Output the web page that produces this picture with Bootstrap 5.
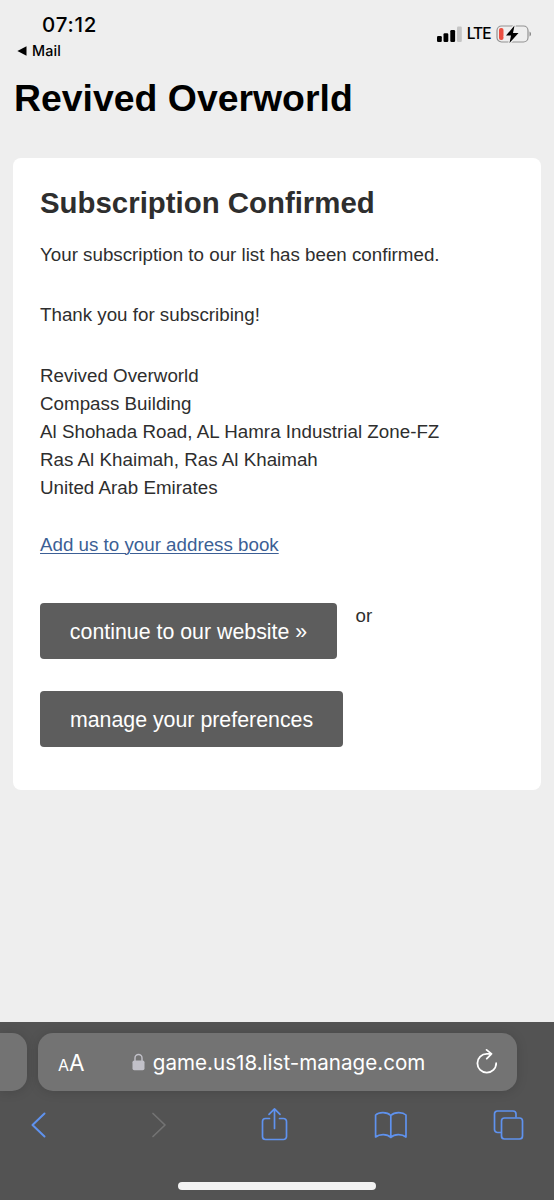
<!DOCTYPE html>
<html lang="en">
<head>
<meta charset="utf-8">
<meta name="viewport" content="width=device-width, initial-scale=1">
<title>Subscription Confirmed</title>
<link href="https://cdn.jsdelivr.net/npm/bootstrap@5.3.0/dist/css/bootstrap.min.css" rel="stylesheet">
<style>
body { background: #eee; color: #2e2e2e; font: 18.75px/28.1px "Liberation Sans", Arial, sans-serif; height: 1200px; overflow: hidden; }
.ui-font { font-family: Inter, "Liberation Sans", sans-serif; }
.status { height: 66px; padding: 11px 22.5px 0 17px; color: #000; }
.clock { font-size: 20.5px; line-height: 27px; font-weight: 500; padding-left: 25px; letter-spacing: .8px; }
.back { font-size: 14.3px; line-height: 20px; font-weight: 500; margin-top: 3px; gap: 5px; letter-spacing: .15px; }
.signal { padding-top: 14px; gap: 5px; height: 32px; }
.lte { font-size: 15.5px; line-height: 18px; letter-spacing: -1px; font-weight: 500; }
.site-title { font-size: 37.4px; line-height: 44px; font-weight: 700; color: #000; margin: 10px 0 0 14px; }
.panel { border: 0; border-radius: 8px; margin: 38px 13.5px 0 13px; padding: 27px 27px 43px; height: 632px; color: inherit; }
.panel h2 { font-size: 29.4px; line-height: 36px; font-weight: 700; margin: 0 0 20px; }
.panel p { margin: 0 0 32.4px; }
.panel address { margin: 0 0 28.1px; line-height: 28.1px; letter-spacing: .02px; }
.book { color: #3c5f95; text-underline-offset: 2px; text-decoration-thickness: 1px; }
.btn-grey { --bs-btn-color: #fff; --bs-btn-bg: #5d5d5d; --bs-btn-border-width: 0; --bs-btn-border-radius: 4px; --bs-btn-padding-x: 0; --bs-btn-padding-y: 0; font-size: 21.35px; line-height: 58px; height: 56px; }
.go { width: 297px; }
.prefs { width: 303px; margin-top: 32px; }
.or { margin-left: 18.5px; margin-top: -1px; }
.browser { height: 178px; background: #535353; color: #fff; padding-top: 10.5px; }
.pill { background: #737373; height: 58.5px; border-radius: 15px; box-shadow: 0 1px 12px rgba(0,0,0,.14); }
.prev-tab { width: 27px; border-radius: 0 15px 15px 0; margin-right: 11px; }
.tab-main { width: 478.5px; padding: 0 20px 0 20px; }
.text-size { padding-top: 3px; }
.small-a { font-size: 16px; }
.big-a { font-size: 22.5px; }
.site-address { gap: 8px; margin-right: 3px; }
.url { font-size: 20.6px; line-height: 28px; padding-top: 2px; }
.tools { color: #5f92ee; padding: 16px 28px 0 21px; }
.home { width: 198px; height: 7.5px; border-radius: 4px; background: #f3f3f3; margin-top: 39.3px; }
svg { display: block; flex: none; }
</style>
</head>
<body class="d-flex flex-column">
<header class="status ui-font d-flex justify-content-between">
  <div>
    <div class="clock">07:12</div>
    <div class="back d-flex align-items-center">
      <svg width="10" height="10" viewBox="0 0 10 10"><path d="M.4 5 9.500.3v9.400z" fill="#000"/></svg>Mail
    </div>
  </div>
  <div class="signal d-flex align-items-center">
    <svg width="25" height="18" viewBox="0 0 25 18"><rect x="0" y="11" width="4.800" height="6" rx="1.200"/><rect x="6.500" y="8.300" width="4.800" height="8.700" rx="1.200"/><rect x="13.300" y="5" width="4.800" height="12" rx="1.200"/><rect x="20" y="1.500" width="4.800" height="15.500" rx="1.200" fill="#c5c5c5"/></svg>
    <span class="lte">LTE</span>
    <svg width="36" height="20" viewBox="0 0 36 20"><rect x="1" y="2" width="31" height="16" rx="4.500" fill="none" stroke="#929292" stroke-width="1.200"/><path d="M33.500 7.500c2 .7 2 4.300 0 5z" fill="#888"/><rect x="3" y="4" width="4.500" height="12" rx="2" fill="#eb4f42"/><path d="M18.500 1.500 10 11.500h5L13.500 19 22.500 9h-5.500z" fill="#000" stroke="#eee" stroke-width="2.500" paint-order="stroke"/></svg>
  </div>
</header>
<main class="flex-grow-1">
  <h1 class="site-title">Revived Overworld</h1>
  <section class="card panel bg-white">
    <h2>Subscription Confirmed</h2>
    <p>Your subscription to our list has been confirmed.</p>
    <p>Thank you for subscribing!</p>
    <address>Revived Overworld<br>Compass Building<br>Al Shohada Road, AL Hamra Industrial Zone-FZ<br>Ras Al Khaimah, Ras Al Khaimah<br>United Arab Emirates</address>
    <div><a class="book" href="#">Add us to your address book</a></div>
    <div class="d-flex mt-auto"><a class="btn btn-grey go" href="#">continue to our website »</a><span class="or">or</span></div>
    <a class="btn btn-grey prefs" href="#">manage your preferences</a>
  </section>
</main>
<footer class="browser ui-font">
  <div class="d-flex">
    <div class="pill prev-tab"></div>
    <div class="pill tab-main d-flex align-items-center justify-content-between">
      <div class="text-size lh-1"><span class="small-a">A</span><span class="big-a">A</span></div>
      <div class="site-address d-flex align-items-center">
        <svg width="13" height="18" viewBox="0 0 13 18"><rect x=".5" y="7.500" width="12" height="9.800" rx="1.800" fill="#c2c1c9"/><path d="M3 8V5a3.500 3.500 0 0 1 7 0v3" fill="none" stroke="#c2c1c9" stroke-width="1.400"/></svg>
        <span class="url">game.us18.list-manage.com</span>
      </div>
      <svg width="21" height="26" viewBox="0 0 21 26" fill="none" stroke="#fff" stroke-width="1.800" stroke-linecap="round" stroke-linejoin="round"><path d="M20.200 14.200a9.400 9.400 0 1 1-9.400-9.400h4.700M10.600.9l4.900 4-4.700 4.800"/></svg>
    </div>
  </div>
  <div class="tools d-flex justify-content-between align-items-center">
    <svg width="34" height="36" viewBox="0 0 34 36" fill="none" stroke="currentColor" stroke-width="2" stroke-linecap="round" stroke-linejoin="round"><path d="M23.500 6.500 11.500 18l12 11.500"/></svg>
    <svg width="34" height="36" viewBox="0 0 34 36" fill="none" stroke="#737373" stroke-width="1.700" stroke-linecap="round" stroke-linejoin="round"><path d="m14 6.500 12 11.500-12 11.500"/></svg>
    <svg width="34" height="36" viewBox="0 0 34 36" fill="none" stroke="currentColor" stroke-width="1.700" stroke-linecap="round" stroke-linejoin="round"><path d="M12.500 11.500h-4a3 3 0 0 0-3 3V29.500a3 3 0 0 0 3 3h18a3 3 0 0 0 3-3V14.500a3 3 0 0 0-3-3h-4M17.500 21.500V2M12 7.300l5.500-5.500 5.500 5.500"/></svg>
    <svg width="34" height="36" viewBox="0 0 34 36" fill="none" stroke="currentColor" stroke-width="1.700" stroke-linecap="round" stroke-linejoin="round"><path d="M16.800 8.500C13 4.700 5 4.700 1.600 8v22c4-3.300 11.600-3.300 15.200.4 3.600-3.700 11.200-3.700 15.200-.4V8C28.600 4.700 20.600 4.700 16.800 8.500zM16.800 8.500v22"/></svg>
    <svg width="34" height="36" viewBox="0 0 34 36" fill="none" stroke="currentColor" stroke-width="1.700"><path d="M9.500 25.500h-4a3 3 0 0 1-3-3V7a3 3 0 0 1 3-3h15.500a3 3 0 0 1 3 3v3.500"/><rect x="9.500" y="11" width="21" height="21" rx="3"/></svg>
  </div>
  <div class="home mx-auto"></div>
</footer>
<script src="https://cdn.jsdelivr.net/npm/bootstrap@5.3.0/dist/js/bootstrap.bundle.min.js"></script>
</body>
</html>
